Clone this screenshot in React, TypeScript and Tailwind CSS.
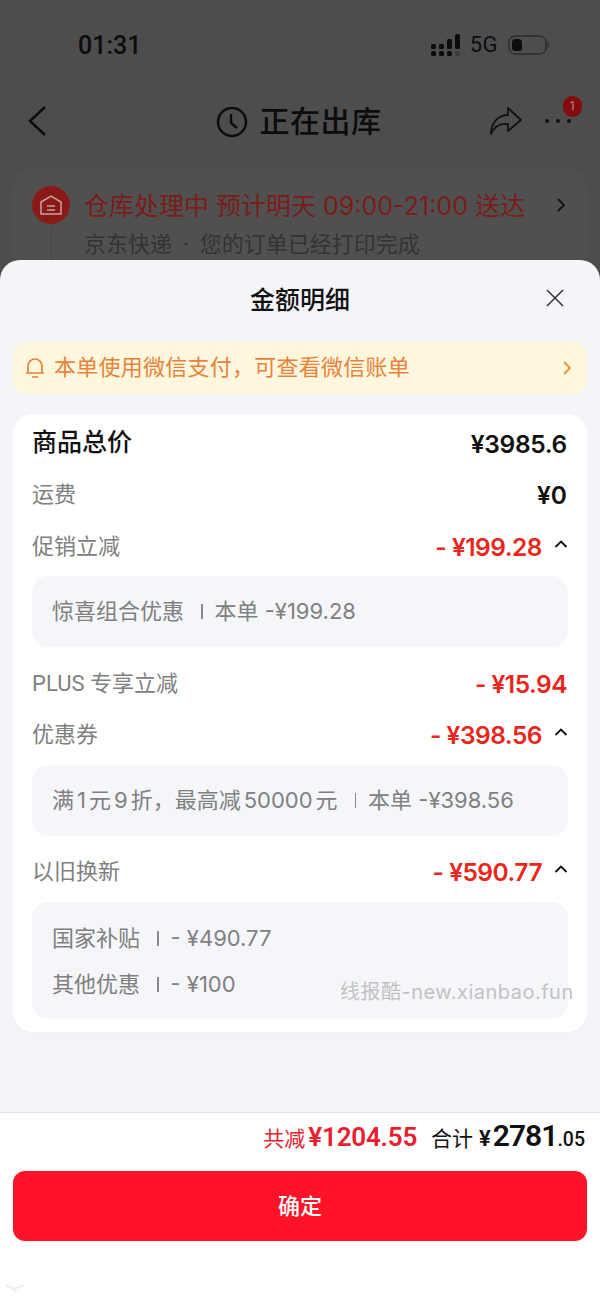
const font = { fontFamily: '"Roboto", "Noto Sans CJK SC", sans-serif' };
const inter = { fontFamily: '"Inter", "Noto Sans CJK SC", sans-serif' };

function Up() {
  return (
    <svg width="14" height="10" viewBox="0 0 14 10" fill="none" stroke="#111" strokeWidth="1.8" className="ml-[12px] mb-[6px]">
      <path d="M1.5 8 L7 2.5 L12.5 8" />
    </svg>
  );
}

function Row({ label, value, open, cls }: { label: string; value: string; open?: boolean; cls: string }) {
  return (
    <div className={`flex items-center justify-between h-[30px] ${cls}`}>
      <span className="text-[22px] leading-[30px] text-[#808080]">{label}</span>
      <span className="flex items-center">
        <span className="text-[24.5px] leading-[30px] font-semibold text-[#e9261c] tracking-[-0.5px]" style={inter}>{value}</span>
        {open && <Up />}
      </span>
    </div>
  );
}

function Sep() {
  return <span className="inline-block w-[1.5px] h-[15px] bg-[#8a8a8a] ml-[17px] mr-[12px]" />;
}

export default function App() {
  return (
    <div className="relative w-[600px] h-[1300px] flex flex-col overflow-hidden bg-[#4d4d4d]" style={font}>
      <div className="h-[260px] shrink-0 overflow-hidden bg-[#4d4d4d]">
        <div className="h-[90px] pt-[29px] pl-[78px] pr-[50px] flex items-start justify-between">
          <span className="text-[25px] leading-[34px] font-medium text-[#0c0c0c]">01:31</span>
          <div className="flex items-center h-[32px]">
            <svg width="31" height="22" viewBox="0 0 31 22" fill="#0c0c0c">
              <rect x="1" y="10" width="5" height="5" rx="1.5" />
              <rect x="1" y="17" width="5" height="5" rx="1.5" />
              <rect x="9" y="10" width="5" height="5" rx="1.5" />
              <rect x="9" y="17" width="5" height="5" rx="1.5" />
              <rect x="17" y="5" width="5" height="10" rx="1.5" />
              <rect x="17" y="17" width="5" height="5" rx="1.5" />
              <rect x="25" y="0" width="5" height="15" rx="1.5" />
              <rect x="25" y="17" width="5" height="5" rx="1.5" fill="#3e3e3e" />
            </svg>
            <span className="ml-[9px] text-[22px] leading-[32px] tracking-[0.5px] text-[#0c0c0c]">5G</span>
            <svg width="42" height="22" viewBox="0 0 42 22" className="ml-[10px]" fill="none">
              <rect x="1" y="2" width="37" height="18" rx="6" stroke="#1a1a1a" strokeWidth="1" />
              <rect x="4" y="5" width="10" height="12" rx="3.5" fill="#0c0c0c" />
              <path d="M40 8 v6" stroke="#333" strokeWidth="1.5" />
            </svg>
          </div>
        </div>

        <div className="relative h-[62px] flex items-center justify-center">
          <svg width="22" height="32" viewBox="0 0 22 32" fill="none" stroke="#0c0c0c" strokeWidth="2.4" className="absolute left-[27px] top-[15px]">
            <path d="M18 2 L3 16 L18 30" />
          </svg>
          <svg width="32" height="32" viewBox="0 0 32 32" fill="none" stroke="#0c0c0c" strokeWidth="2.4" className="mr-[12px] ml-[-3px] mt-[1px]">
            <circle cx="16" cy="16" r="14" />
            <path d="M15 8 V17 L21 22" />
          </svg>
          <span className="text-[30px] leading-[40px] font-medium tracking-[0.5px] text-[#0c0c0c] mt-[2px]">正在出库</span>
          <svg width="34" height="30" viewBox="0 0 34 30" fill="none" stroke="#111" strokeWidth="1.8" strokeLinejoin="round" className="absolute left-[489px] top-[16px]">
            <path d="M19 2 L32 14 L19 25 V18 C11 17 5 21 2 28 C2 17 9 9 19 9 Z" />
          </svg>
          <div className="absolute left-[545px] top-[29px] flex gap-[7px]">
            <span className="w-[4px] h-[4px] rounded-full bg-[#111]" />
            <span className="w-[4px] h-[4px] rounded-full bg-[#111]" />
            <span className="w-[4px] h-[4px] rounded-full bg-[#111]" />
          </div>
          <span className="absolute left-[563px] top-[6px] w-[19px] h-[21px] rounded-full bg-[#850b0e] text-[#b08a8a] text-[12px] leading-[21px] text-center">1</span>
        </div>

        <div className="relative mx-[13px] mt-[16px] h-[120px] rounded-[20px] bg-[#505050] pl-[71px] pt-[21px]">
          <div className="absolute left-[19px] top-[18px] w-[38px] h-[38px] rounded-full bg-[#8a1a18] flex items-center justify-center">
            <svg width="24" height="22" viewBox="0 0 24 22" fill="none" stroke="#c9a3a2" strokeWidth="1.5">
              <path d="M2 8 L12 2 L22 8 V20 H2 Z" />
              <path d="M8 12 H16 M8 16 H16" />
            </svg>
          </div>
          <div className="absolute left-[38px] top-[60px] w-[1px] h-[60px] bg-[#444]" />
          <div className="h-[34px] text-[25px] leading-[34px] text-[#7a1c18] whitespace-nowrap" style={inter}>
            仓库处理中 预计明天 09:00-21:00 送达
          </div>
          <svg width="10" height="16" viewBox="0 0 10 16" fill="none" stroke="#111" strokeWidth="1.8" className="absolute left-[543px] top-[29px]">
            <path d="M2 2 L8 8 L2 14" />
          </svg>
          <div className="flex items-center mt-[7px] text-[22px] leading-[30px] text-[#333333] whitespace-nowrap">
            <span>京东快递</span>
            <span className="mx-[11px]">·</span>
            <span>您的订单已经打印完成</span>
          </div>
        </div>
      </div>

      <div className="flex-1 flex flex-col rounded-t-[20px] bg-[#f4f5f9] overflow-hidden">
        <div className="relative h-[82px] flex items-start justify-center pt-[24px]">
          <span className="text-[25px] leading-[34px] font-medium text-[#111]">金额明细</span>
          <svg width="20" height="20" viewBox="0 0 20 20" fill="none" stroke="#333" strokeWidth="1.5" className="absolute left-[545px] top-[28px]">
            <path d="M2 2 L18 18 M18 2 L2 18" />
          </svg>
        </div>

        <div className="mx-[13px] h-[52px] rounded-[14px] bg-[#fff6de] flex items-center pl-[12px] pr-[15px]">
          <svg width="20" height="22" viewBox="0 0 20 22" fill="none" stroke="#e8833a" strokeWidth="1.7">
            <path d="M3 16 V9 a7 7 0 0 1 14 0 V16 Z M1 16 H19 M7 20 H13" />
          </svg>
          <span className="ml-[9px] flex-1 text-[22px] leading-[30px] tracking-[0.25px] text-[#e8833a]">本单使用微信支付{"\uFF0C"}可查看微信账单</span>
          <svg width="10" height="16" viewBox="0 0 10 16" fill="none" stroke="#e8933a" strokeWidth="1.9">
            <path d="M2 2 L8 8 L2 14" />
          </svg>
        </div>

        <div className="relative mx-[13px] mt-[20px] h-[618px] rounded-[20px] bg-white px-[19px] pt-[12px] shadow-[0_4px_12px_rgba(0,0,0,0.015)]">
          <div className="flex items-center justify-between h-[34px] mr-[1px]">
            <span className="text-[25px] leading-[34px] font-medium text-[#111]">商品总价</span>
            <span className="text-[24.5px] leading-[34px] font-semibold text-[#111] tracking-[-0.3px] mt-[2px]" style={inter}>¥3985.6</span>
          </div>
          <div className="flex items-center justify-between h-[30px] mt-[20px] mr-[1px]">
            <span className="text-[22px] leading-[30px] text-[#808080]">运费</span>
            <span className="text-[24.5px] leading-[30px] font-semibold text-[#111]" style={inter}>¥0</span>
          </div>
          <Row label="促销立减" value="- ¥199.28" open cls="mt-[22px]" />
          <div className="mt-[14px] h-[71px] rounded-[16px] bg-[#f5f6fa] flex items-center pl-[20px] text-[22px] text-[#808080] whitespace-nowrap" style={inter}>
            <span>惊喜组合优惠</span>
            <Sep />
            <span>本单 -¥199.28</span>
          </div>
          <Row label="PLUS 专享立减" value="- ¥15.94" cls="mt-[22px] mr-[1px]" />
          <Row label="优惠券" value="- ¥398.56" open cls="mt-[21px]" />
          <div className="mt-[15px] h-[71px] rounded-[16px] bg-[#f5f6fa] flex items-center pl-[20px] text-[22px] text-[#808080] whitespace-nowrap" style={inter}>
            <span>
              满<span className="mx-[3px]">1</span>元<span className="mx-[3px]">9</span>折{"\uFF0C"}最高减<span className="mx-[3px]">50000</span>元
            </span>
            <Sep />
            <span>本单 -¥398.56</span>
          </div>
          <Row label="以旧换新" value="- ¥590.77" open cls="mt-[21px]" />
          <div className="mt-[15px] h-[117px] rounded-[16px] bg-[#f5f6fa] pl-[20px] pt-[21px] text-[22px] text-[#808080] whitespace-nowrap" style={inter}>
            <div className="flex items-center h-[30px]">
              <span>国家补贴</span>
              <Sep />
              <span>- ¥490.77</span>
            </div>
            <div className="flex items-center h-[30px] mt-[16px]">
              <span>其他优惠</span>
              <Sep />
              <span>- ¥100</span>
            </div>
          </div>
          <span className="absolute left-[327px] top-[563px] text-[20px] leading-[30px] text-[#c2c2c2] tracking-[0.5px] whitespace-nowrap" style={inter}>线报酷-new.xianbao.fun</span>
        </div>

        <div className="mt-[80px] flex-1 bg-white border-t border-[#e2e2e2] flex flex-col">
          <div className="h-[50px] pr-[15px] flex items-baseline justify-end whitespace-nowrap pt-[1px]">
            <span className="text-[21px] leading-[44px] text-[#e8202f]">共减</span>
            <span className="text-[26px] leading-[44px] font-semibold text-[#e8202f] tracking-[-0.2px] ml-[3px]">¥1204.55</span>
            <span className="ml-[14px] text-[21px] leading-[44px] text-[#111]">合计</span>
            <span className="ml-[6px] text-[22px] leading-[44px] font-semibold text-[#111]">¥</span>
            <span className="ml-[2px] text-[30px] leading-[44px] font-semibold text-[#111] tracking-[-1px]">2781</span>
            <span className="text-[19.5px] leading-[44px] font-medium text-[#111]">.05</span>
          </div>
          <div className="mx-[13px] mt-[8px] h-[70px] rounded-[12px] bg-[#ff1427] flex items-center justify-center text-[22px] font-medium text-white">确定</div>
        </div>
      </div>
      <svg width="22" height="12" viewBox="0 0 22 12" fill="none" stroke="#ececec" strokeWidth="2" className="absolute left-[4px] top-[1282px]">
        <path d="M2 3 L10 7 L20 3 M9 7 L12 10" />
      </svg>
    </div>
  );
}
